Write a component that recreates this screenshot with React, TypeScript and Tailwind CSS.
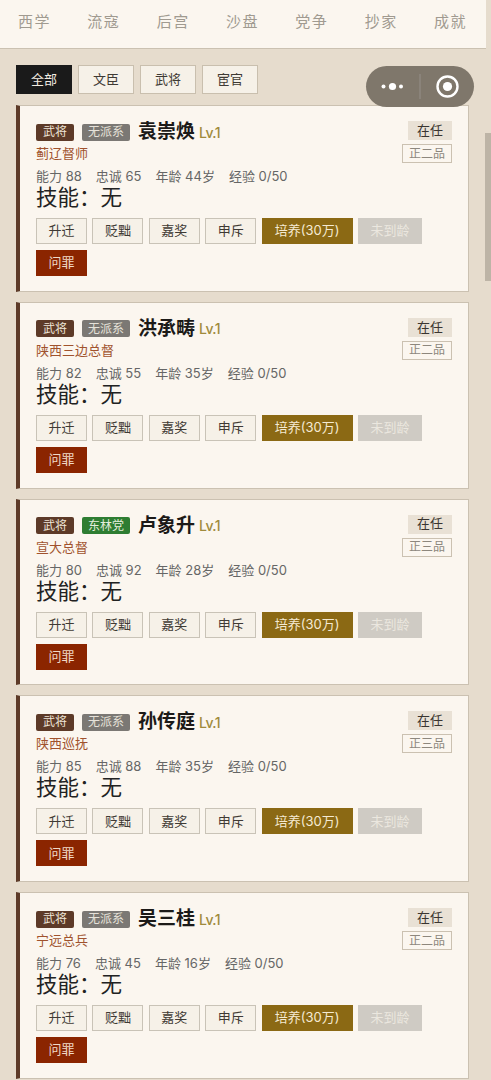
import React from 'react';

const tabs = ['西学', '流寇', '后宫', '沙盘', '党争', '抄家', '成就'];
const filters = ['全部', '文臣', '武将', '宦官'];
const actions = ['升迁', '贬黜', '嘉奖', '申斥'];

interface Officer {
  name: string;
  faction: string;
  post: string;
  rank: string;
  ability: number;
  loyalty: number;
  age: number;
}

const officers: Officer[] = [
  { name: '袁崇焕', faction: '无派系', post: '蓟辽督师', rank: '正二品', ability: 88, loyalty: 65, age: 44 },
  { name: '洪承畴', faction: '无派系', post: '陕西三边总督', rank: '正二品', ability: 82, loyalty: 55, age: 35 },
  { name: '卢象升', faction: '东林党', post: '宣大总督', rank: '正三品', ability: 80, loyalty: 92, age: 28 },
  { name: '孙传庭', faction: '无派系', post: '陕西巡抚', rank: '正三品', ability: 85, loyalty: 88, age: 35 },
  { name: '吴三桂', faction: '无派系', post: '宁远总兵', rank: '正二品', ability: 76, loyalty: 45, age: 16 },
];

const OfficerCard = ({ officer }: { officer: Officer }) => (
  <div className="h-[186.75px] border border-[#cbc1b1] border-l-4 border-l-[#5d3a28] bg-[#fbf6ef] pl-4 pr-4 pt-[15px]">
    <div className="flex justify-between">
      <div className="min-w-0">
        <div className="mt-[1px] flex h-[20px] items-center">
          <span className="flex h-[17px] w-[38px] items-center justify-center rounded-[2px] bg-[#5d3a28] text-[12px] text-[#efe6d8]">武将</span>
          <span className={`ml-2 flex h-[17px] w-[48px] items-center justify-center rounded-[2px] text-[12px] ${officer.faction === '东林党' ? 'bg-[#2e7d32] text-[#e4eedd]' : 'bg-[#7b7874] text-[#e6e2da]'}`}>{officer.faction}</span>
          <span className="ml-2 text-[19px] leading-[20px] font-bold text-[#1c1a18]">{officer.name}</span>
          <span className="ml-1 mt-[1px] text-[14px] leading-[20px] font-medium tracking-[-0.6px] text-[#a08a3c]">Lv.1</span>
        </div>
        <div className="mt-[1px] text-[13px] leading-[20px] text-[#a0522d]">{officer.post}</div>
      </div>
      <div className="flex flex-col items-end">
        <span className="flex h-[19px] w-[44px] items-center justify-center bg-[#e9e1d5] text-[13px] text-[#3a3530]">在任</span>
        <span className="mt-[4px] flex h-[19px] w-[50px] items-center justify-center border border-[#cbc1b1] text-[12px] text-[#8d877d]">{officer.rank}</span>
      </div>
    </div>
    <div className="mt-[3px] flex gap-[14px] text-[13px] leading-[20px] text-[#666666]">
      <span>能力 {officer.ability}</span>
      <span>忠诚 {officer.loyalty}</span>
      <span>年龄 {officer.age}岁</span>
      <span>经验 0/50</span>
    </div>
    <div className="mt-[-1px] text-[21.5px] leading-[24px] text-[#222222]">技能：无</div>
    <div className="mt-[9px] flex w-[400px] flex-wrap gap-x-[5.4px] gap-y-[6px] text-[13px]">
      {actions.map((a) => (
        <span key={a} className="flex h-[26px] w-[51px] items-center justify-center border border-[#c9c3b7] bg-[#f6f1e8] text-[#3f3a34]">{a}</span>
      ))}
      <span className="flex h-[26px] w-[91px] items-center justify-center bg-[#8b6914] text-[#f5ead2]">培养(30万)</span>
      <span className="flex h-[26px] w-[64px] items-center justify-center bg-[#cfcbc4] text-[#ebe7df]">未到龄</span>
      <span className="flex h-[26px] w-[51px] items-center justify-center bg-[#8b2500] text-[#f0d9c8]">问罪</span>
    </div>
  </div>
);

export default function App() {
  return (
    <div className="relative h-[1080px] w-[491px] overflow-hidden bg-[#e6dccd] font-['Inter','Noto_Sans_CJK_SC',sans-serif]">
      <div className="flex h-[49px] w-[486px] items-center justify-between border-b border-[#cbc1b1] bg-[#fbf6ef] pb-[3px] pl-[18px] pr-[19px]">
        {tabs.map((t) => (
          <span key={t} className="text-[15px] tracking-[1.5px] text-[#a09a90]">{t}</span>
        ))}
      </div>

      <div className="w-[486px] pl-4 pr-[17px] pt-[16px]">
        <div className="flex gap-[6px]">
          {filters.map((f, i) => (
            <span key={f} className={`flex h-[29px] w-[56px] items-center justify-center border text-[13px] ${i === 0 ? 'border-[#1a1a1a] bg-[#1a1a1a] text-[#f2ece2]' : 'border-[#c9bfae] bg-[#f6f1e8] text-[#3f3a34]'}`}>{f}</span>
          ))}
        </div>
        <div className="mt-[11px] flex flex-col gap-[10px]">
          {officers.map((o) => (
            <OfficerCard key={o.name} officer={o} />
          ))}
        </div>
      </div>

      {/* capsule over the page */}
      <div className="absolute left-[366px] top-[66px] flex h-[41px] w-[108px] items-center rounded-[21px] bg-[#7f776b]">
        <svg width="108" height="41" viewBox="0 0 108 41">
          <circle cx="17.5" cy="20.5" r="2" fill="#fff" />
          <circle cx="26.5" cy="20.5" r="3.6" fill="#fff" />
          <circle cx="35" cy="20.5" r="2" fill="#fff" />
          <line x1="54" y1="8" x2="54" y2="33" stroke="#96908a" strokeWidth="1" />
          <circle cx="81.5" cy="20.5" r="10" fill="none" stroke="#fff" strokeWidth="2.4" />
          <circle cx="81.5" cy="20.5" r="4.6" fill="#fff" />
        </svg>
      </div>

      {/* scrollbar thumb */}
      <div className="absolute left-[485px] top-[133px] h-[148px] w-[6px] bg-[#bdb4a6]" />
    </div>
  );
}
